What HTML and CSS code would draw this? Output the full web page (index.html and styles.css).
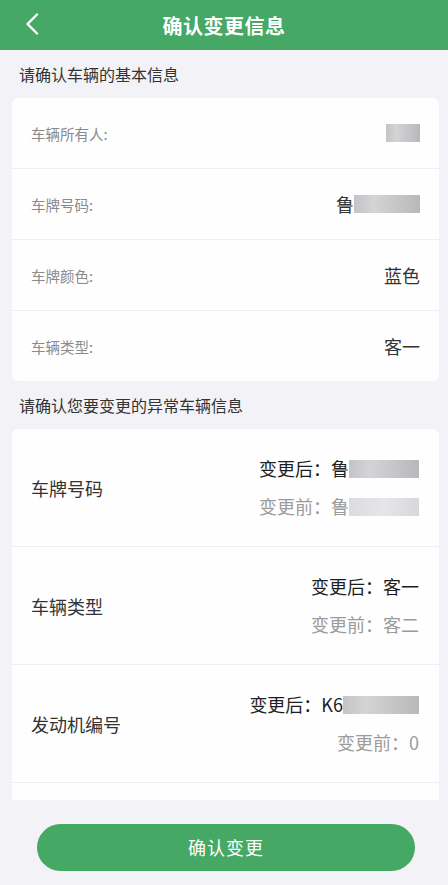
FILE: index.html
```html
<!DOCTYPE html>
<html lang="zh-CN">
    <head>
        <meta charset="utf-8" />
        <meta name="viewport" content="width=device-width, initial-scale=1" />
        <title>确认变更信息</title>
        <link rel="stylesheet" href="styles.css">
    </head>
    <body>
        <header class="topbar">
            <svg class="back" width="14" height="22" viewBox="0 0 14 22">
                <polyline points="12,1.5 2.5,11 12,20.5" fill="none" stroke="#fff" stroke-width="2.4" stroke-linecap="round" stroke-linejoin="round"/>
            </svg>
            <h1>确认变更信息</h1>
        </header>

        <main class="scroll">
            <p class="section-title">请确认车辆的基本信息</p>
            <section class="card">
                <div class="row">
                    <span class="label">车辆所有人:</span>
                    <span class="value"><span class="mask" style="width:34px"></span></span>
                </div>
                <div class="row">
                    <span class="label">车牌号码:</span>
                    <span class="value">鲁<span class="mask" style="width:66px"></span></span>
                </div>
                <div class="row">
                    <span class="label">车牌颜色:</span>
                    <span class="value">蓝色</span>
                </div>
                <div class="row">
                    <span class="label">车辆类型:</span>
                    <span class="value">客一</span>
                </div>
            </section>

            <p class="section-title">请确认您要变更的异常车辆信息</p>
            <section class="card">
                <div class="change">
                    <span class="name">车牌号码</span>
                    <div class="diff">
                        <span class="after">变更后：鲁<span class="mask" style="width:70px"></span></span>
                        <span class="before">变更前：鲁<span class="mask light" style="width:70px"></span></span>
                    </div>
                </div>
                <div class="change">
                    <span class="name">车辆类型</span>
                    <div class="diff">
                        <span class="after">变更后：客一</span>
                        <span class="before">变更前：客二</span>
                    </div>
                </div>
                <div class="change">
                    <span class="name">发动机编号</span>
                    <div class="diff">
                        <span class="after">变更后：K6<span class="mask" style="width:76px"></span></span>
                        <span class="before">变更前：0</span>
                    </div>
                </div>
                <div class="change"></div>
            </section>
        </main>

        <footer class="bottom">
            <button class="confirm">确认变更</button>
        </footer>
    </body>
</html>
```

FILE: styles.css
```css
* { margin: 0; padding: 0; box-sizing: border-box; }
html, body { height: 100%; }
body {
    font-family: "Noto Sans CJK SC", "Noto Sans", sans-serif;
    background: #f3f2f6;
    color: #333;
    display: flex;
    flex-direction: column;
    overflow: hidden;
}

/* barra superior */
.topbar {
    height: 50px;
    flex: none;
    background: #45a865;
    display: flex;
    align-items: center;
    justify-content: center;
    position: relative;
}
.topbar h1 { color: #fff; font-size: 20px; font-weight: bold; letter-spacing: 0.5px; }
.back { position: absolute; left: 25px; top: 13px; }

/* zona desplazable */
.scroll { flex: 1; overflow: hidden; padding: 0 9px 0 12px; }

.section-title {
    height: 48px;
    line-height: 48px;
    padding-left: 7px;
    font-size: 16px;
    color: #333;
}

.card { background: #fefeff; border-radius: 6px; overflow: hidden; }

.row {
    height: 71px;
    display: flex;
    align-items: center;
    justify-content: space-between;
    padding: 0 19px 0 19px;
    border-top: 1px solid #efeff1;
}
.row:first-child { border-top: none; height: 70px; }
.row .label { font-size: 14.5px; color: #8a8a8a; }
.row .value { font-size: 18px; color: #333; display: flex; align-items: center; }

.change {
    height: 118px;
    display: flex;
    align-items: center;
    justify-content: space-between;
    padding: 0 20px 0 19px;
    border-top: 1px solid #efeff1;
}
.change:first-child { border-top: none; height: 117px; }
.change .name { font-size: 18px; color: #333; }
.diff { display: flex; flex-direction: column; align-items: flex-end; gap: 13px; }
.diff span { font-size: 18px; line-height: 25px; display: flex; align-items: center; }
.diff .after { color: #1e1e1e; }
.diff .before { color: #9b9b9b; }

/* datos ocultos */
.mask {
    display: inline-block;
    height: 18px;
    background: linear-gradient(90deg, #c4c4c6, #d4d4d6 30%, #c8c8ca 60%, #b8b8ba);
}
.mask.light { background: linear-gradient(90deg, #dcdcde, #e6e6e8 50%, #d8d8da); }

/* pie */
.bottom {
    height: 85px;
    flex: none;
    display: flex;
    align-items: center;
    justify-content: center;
    padding: 9px 0 0 4px;
}
.confirm {
    width: 378px;
    height: 47px;
    border: none;
    border-radius: 24px;
    background: #45a865;
    color: #fff;
    font-family: inherit;
    font-size: 18px;
    letter-spacing: 1px;
}
```
